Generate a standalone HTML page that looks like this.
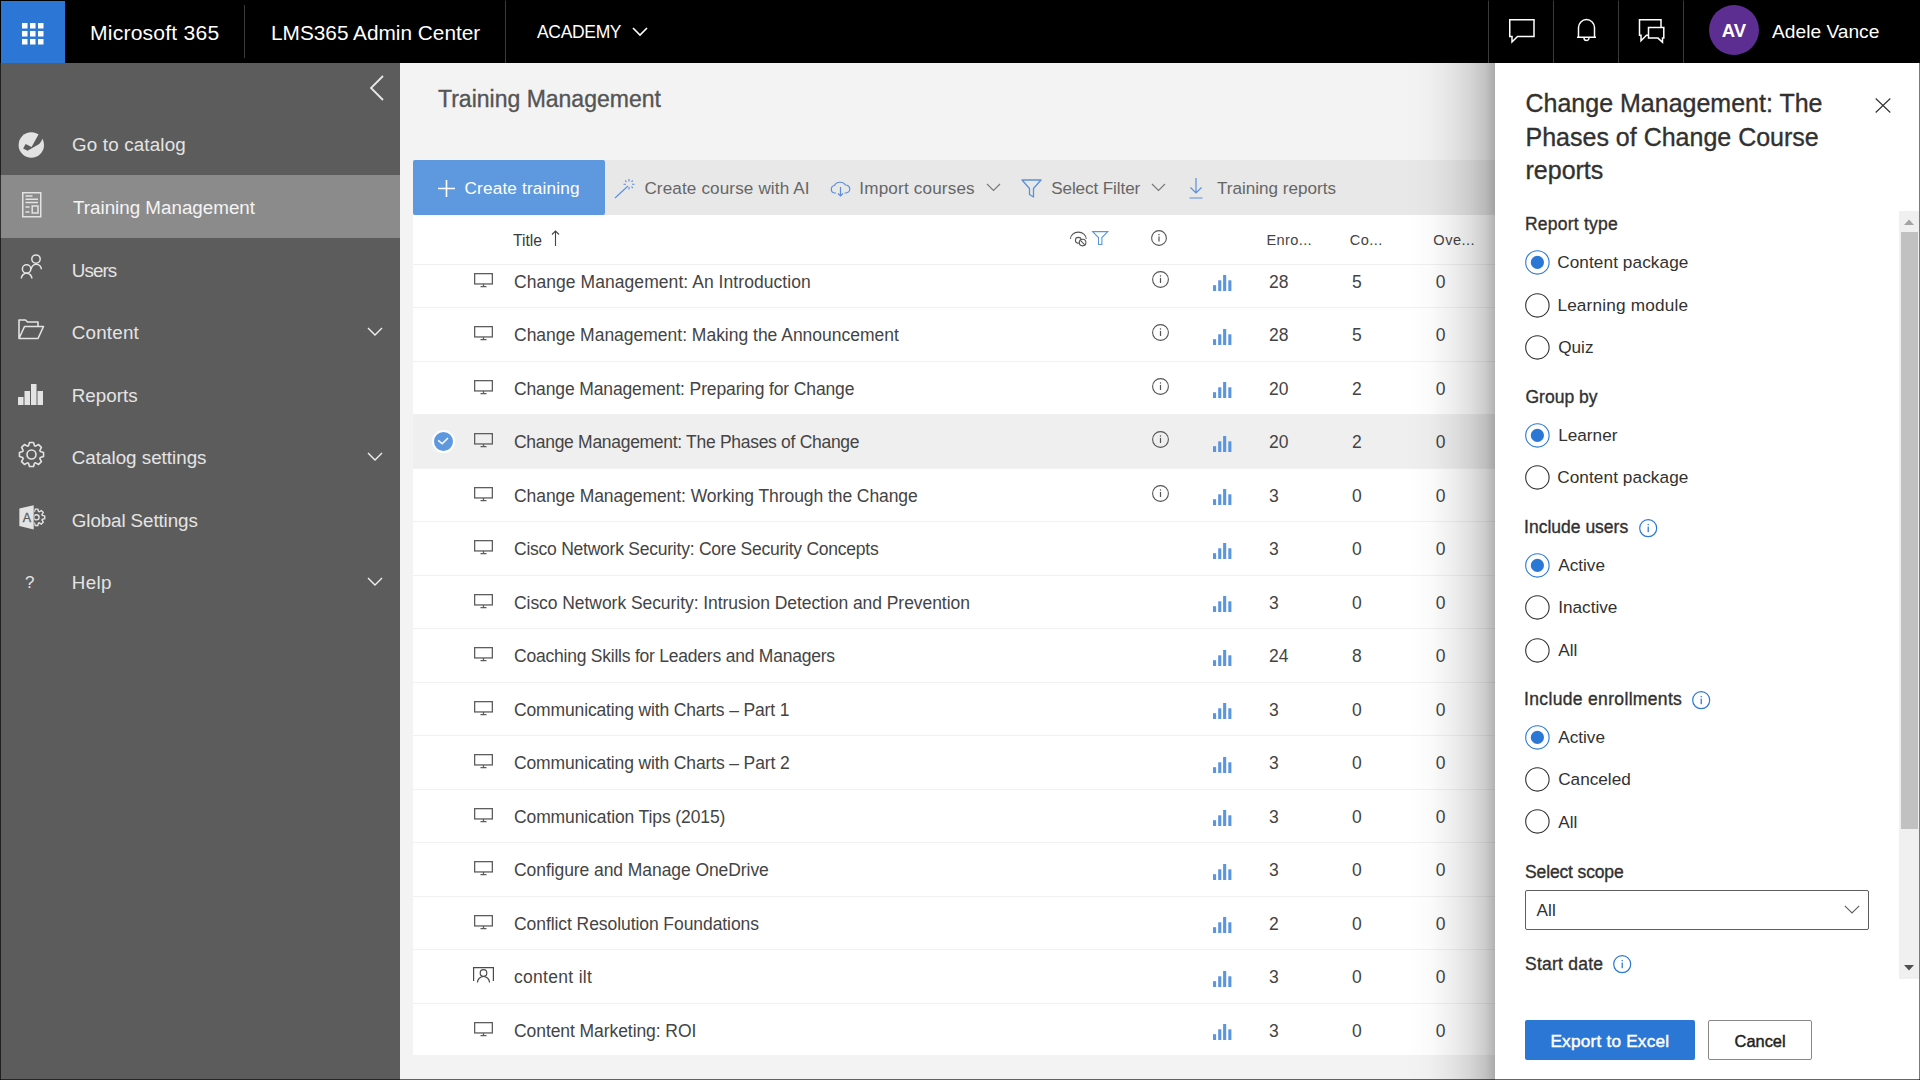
<!DOCTYPE html>
<html><head><meta charset="utf-8">
<style>
*{margin:0;padding:0;box-sizing:border-box}
html,body{width:1920px;height:1080px;overflow:hidden;background:#f3f3f3;font-family:"Liberation Sans",sans-serif}
.abs{position:absolute}
.t{position:absolute;white-space:nowrap;line-height:1}
svg{position:absolute;overflow:visible}
/* header */
#hdr{position:absolute;left:0;top:0;width:1920px;height:63px;background:#000}
#waffle{position:absolute;left:1px;top:1px;width:64px;height:62px;background:#2c77d6}
.hdiv{position:absolute;width:1px;background:#3a3a3a}
/* sidebar */
#side{position:absolute;left:0;top:63px;width:400px;height:1017px;background:#5c5c5c}
.nav{position:absolute;left:0;width:400px;height:63px}
.nav .t{left:73px;font-size:18.8px;color:#e4e4e4}
.nav.sel{background:#8b8b8b}
/* main */
#toolbar{position:absolute;left:413px;top:160px;width:1082px;height:55px;background:#e8e8e8}
#create{position:absolute;left:413px;top:160px;width:192px;height:55px;background:#5e98df;border-radius:2px}
#table{position:absolute;left:413px;top:215px;width:1082px;height:840px;background:#fff;overflow:hidden}
.row{position:absolute;left:0;width:1082px;height:54px;border-top:1px solid #f1f1f1}
.row.sel{background:#efefef}
.row .t{font-size:17.5px;color:#444}
.tb{color:#666;font-size:17.1px}
/* panel */
#panel{position:absolute;left:1495px;top:63px;width:425px;height:1017px;background:#fff}
.lbl{position:absolute;left:30px;font-size:16.8px;font-weight:700;color:#323130;white-space:nowrap;line-height:1;letter-spacing:-0.1px}
.rad{position:absolute;left:30px;width:25px;height:25px;border-radius:50%;border:1.5px solid #323130}
.rad.on{border-color:#2b77d6}
.rad.on::after{content:"";position:absolute;left:4.5px;top:4.5px;width:13px;height:13px;border-radius:50%;background:#2b77d6}
.rtx{position:absolute;left:63px;font-size:17.2px;color:#323130;white-space:nowrap;line-height:1}
</style></head><body>

<!-- HEADER -->
<div id="hdr">
  <div id="waffle">
    <svg style="left:21px;top:21px" width="22" height="22" viewBox="0 0 22 22">
      <g fill="#fff">
        <rect x="0" y="1" width="5.5" height="5.5"/><rect x="8" y="1" width="5.5" height="5.5"/><rect x="16" y="1" width="5.5" height="5.5"/>
        <rect x="0" y="9" width="5.5" height="5.5"/><rect x="8" y="9" width="5.5" height="5.5"/><rect x="16" y="9" width="5.5" height="5.5"/>
        <rect x="0" y="17" width="5.5" height="5.5"/><rect x="8" y="17" width="5.5" height="5.5"/><rect x="16" y="17" width="5.5" height="5.5"/>
      </g>
    </svg>
  </div>
  <div class="t" style="left:90.0px;top:22.3px;font-size:21.1px;color:#fff;letter-spacing:0.208px">Microsoft 365</div>
  <div class="hdiv" style="left:244px;top:5px;height:53px"></div>
  <div class="t" style="left:271px;top:22.8px;font-size:20.8px;color:#fff">LMS365 Admin Center</div>
  <div class="hdiv" style="left:505px;top:0;height:63px"></div>
  <div class="t" style="left:537px;top:23.5px;font-size:17.5px;color:#fff;letter-spacing:-0.333px">ACADEMY</div>
  <svg style="left:632px;top:27px" width="16" height="9" viewBox="0 0 16 9"><path d="M1 1 L8 8 L15 1" fill="none" stroke="#fff" stroke-width="1.6"/></svg>

  <div class="hdiv" style="left:1488px;top:0;height:63px"></div>
  <div class="hdiv" style="left:1553px;top:0;height:63px"></div>
  <div class="hdiv" style="left:1618px;top:0;height:63px"></div>
  <div class="hdiv" style="left:1683px;top:0;height:63px"></div>
  <!-- chat -->
  <svg style="left:1508px;top:19px" width="28" height="25" viewBox="0 0 28 25"><path d="M1.75 0.75 H26 V17.5 H9.5 L4 23 V17.5 H1.75 Z" fill="none" stroke="#fff" stroke-width="1.5" stroke-linejoin="miter"/></svg>
  <!-- bell -->
  <svg style="left:1576px;top:18px" width="21" height="25" viewBox="0 0 21 25"><path d="M2.5 19.3 V9.6 A8 8 0 0 1 18.5 9.6 V19.3 M1 19.3 H20" fill="none" stroke="#fff" stroke-width="1.5"/><path d="M8 20 A2.5 2.5 0 0 0 13 20" fill="none" stroke="#fff" stroke-width="1.4"/></svg>
  <!-- double chat -->
  <svg style="left:1638px;top:19px" width="28" height="25" viewBox="0 0 28 25"><path d="M10 16.3 H8.5 L3 21.8 V16.3 H1.5 V0.75 H23 V8.3" fill="none" stroke="#fff" stroke-width="1.5"/><path d="M10.5 8.5 H25.8 V19.1 H24.5 V23.3 L20 19.1 H10.5 Z" fill="none" stroke="#fff" stroke-width="1.5"/></svg>
  <div class="abs" style="left:1709px;top:5px;width:50px;height:50px;border-radius:50%;background:#5c2e91"></div>
  <div class="t" style="left:1709px;top:22px;width:50px;text-align:center;font-size:18.5px;font-weight:700;color:#fff">AV</div>
  <div class="t" style="left:1772px;top:22px;font-size:19.2px;color:#fff">Adele Vance</div>
</div>

<!-- SIDEBAR -->
<div id="side">
  <svg style="left:369px;top:12px" width="15" height="26" viewBox="0 0 15 26"><path d="M14 1 L2 13 L14 25" fill="none" stroke="#e8e8e8" stroke-width="1.8"/></svg>
  <div class="nav" style="top:49px">
    <svg style="left:18px;top:19px" width="27" height="28" viewBox="0 0 27 28"><circle cx="13.3" cy="14" r="12.7" fill="#e3e3e3"/><path d="M20.6 3.3 L13.6 15.9 L7.65 13.06 L5.13 17.47 L9.54 19.67 L21.2 13.06 Q23.2 11 24.34 8.02 L28 4 L24 -1 Z" fill="#5c5c5c"/></svg>
    <div class="t" style="left:72.0px;top:24px;letter-spacing:0.167px">Go to catalog</div>
  </div>
  <div class="nav sel" style="top:112px">
    <svg style="left:21.5px;top:17px" width="20" height="26" viewBox="0 0 20 26"><g fill="none" stroke="#e3e3e3" stroke-width="1.5"><rect x="0.75" y="0.75" width="18" height="24"/><path d="M3.5 4 H10.5 M3.5 7.2 H16 M3.5 10.4 H16 M3.5 15 H7.5 M3.5 20 H7.5"/><rect x="10.2" y="14" width="5.8" height="7"/></g></svg>
    <div class="t" style="top:24px;color:#f4f4f4">Training Management</div>
  </div>
  <div class="nav" style="top:175px">
    <svg style="left:19px;top:16px" width="25" height="26" viewBox="0 0 25 26"><g fill="none" stroke="#e3e3e3" stroke-width="1.5"><circle cx="17" cy="5.1" r="4.2"/><path d="M12.2 15.3 A5.1 5.1 0 0 1 22.4 15.3"/><circle cx="7.6" cy="14.9" r="4.2" fill="#5c5c5c"/><path d="M2.3 24.6 A5.3 5.3 0 0 1 12.9 24.6"/></g></svg>
    <div class="t" style="left:71.8px;top:24px;letter-spacing:-0.9px">Users</div>
  </div>
  <div class="nav" style="top:237px">
    <svg style="left:18px;top:19px" width="27" height="21" viewBox="0 0 27 21"><path d="M1 19.5 V1 H7.5 L9.5 3 H20 V7.5 M1 19.5 L6.5 7.5 H25.5 L20 19.5 Z" fill="none" stroke="#e3e3e3" stroke-width="1.6" stroke-linejoin="round"/></svg>
    <div class="t" style="left:71.8px;top:24px;letter-spacing:0.2px">Content</div>
    <svg style="left:367px;top:27px" width="16" height="9" viewBox="0 0 16 9"><path d="M1 1 L8 8 L15 1" fill="none" stroke="#f0f0f0" stroke-width="1.4"/></svg>
  </div>
  <div class="nav" style="top:300px">
    <svg style="left:18px;top:21px" width="25" height="21" viewBox="0 0 25 21"><g fill="#e3e3e3"><rect x="0" y="13" width="5.5" height="8"/><rect x="6.5" y="7" width="5.5" height="14"/><rect x="13" y="0" width="5.5" height="21"/><rect x="19.5" y="7" width="5.5" height="14"/></g></svg>
    <div class="t" style="left:71.8px;top:24px">Reports</div>
  </div>
  <div class="nav" style="top:362px">
    <svg style="left:18px;top:16px" width="27" height="27" viewBox="-13.5 -13.5 27 27"><path fill="none" stroke="#e3e3e3" stroke-width="1.6" stroke-linejoin="round" d="M8.80 -3.01 L12.03 -2.00 L12.03 2.00 L8.80 3.01 L8.35 4.09 L9.93 7.09 L7.09 9.93 L4.09 8.35 L3.01 8.80 L2.00 12.03 L-2.00 12.03 L-3.01 8.80 L-4.09 8.35 L-7.09 9.93 L-9.93 7.09 L-8.35 4.09 L-8.80 3.01 L-12.03 2.00 L-12.03 -2.00 L-8.80 -3.01 L-8.35 -4.09 L-9.93 -7.09 L-7.09 -9.93 L-4.09 -8.35 L-3.01 -8.80 L-2.00 -12.03 L2.00 -12.03 L3.01 -8.80 L4.09 -8.35 L7.09 -9.93 L9.93 -7.09 L8.35 -4.09 Z"/><circle cx="0" cy="0" r="4.5" fill="none" stroke="#e3e3e3" stroke-width="1.6"/></svg>
    <div class="t" style="left:71.8px;top:24px">Catalog settings</div>
    <svg style="left:367px;top:27px" width="16" height="9" viewBox="0 0 16 9"><path d="M1 1 L8 8 L15 1" fill="none" stroke="#f0f0f0" stroke-width="1.4"/></svg>
  </div>
  <div class="nav" style="top:425px">
    <svg style="left:19px;top:17px" width="27" height="26" viewBox="0 0 27 26"><defs><clipPath id="gclip"><rect x="15.3" y="0" width="12" height="26"/></clipPath></defs><path d="M0.35 3.5 L14.7 0.35 V24.6 L0.35 21.1 Z" fill="#e3e3e3"/><text x="3.7" y="16.7" font-family="Liberation Sans" font-size="12.5" fill="#5c5c5c" stroke="#5c5c5c" stroke-width="0.3">A</text><g clip-path="url(#gclip)" fill="none" stroke="#e3e3e3" stroke-width="1.4"><path d="M15.52 6.53 L16.14 4.11 L18.86 4.11 L19.48 6.53 L20.18 6.82 L22.33 5.55 L24.25 7.47 L22.98 9.62 L23.27 10.32 L25.69 10.94 L25.69 13.66 L23.27 14.28 L22.98 14.98 L24.25 17.13 L22.33 19.05 L20.18 17.78 L19.48 18.07 L18.86 20.49 L16.14 20.49 L15.52 18.07 L14.82 17.78 L12.67 19.05 L10.75 17.13 L12.02 14.98 L11.73 14.28 L9.31 13.66 L9.31 10.94 L11.73 10.32 L12.02 9.62 L10.75 7.47 L12.67 5.55 L14.82 6.82 Z"/><circle cx="17.5" cy="12.3" r="2.6"/></g></svg>
    <div class="t" style="left:71.8px;top:24px;letter-spacing:-0.1px">Global Settings</div>
  </div>
  <div class="nav" style="top:487px">
    <div class="t" style="left:25px;top:24px;font-size:17px;color:#e3e3e3">?</div>
    <div class="t" style="left:71.8px;top:24px;letter-spacing:0.33px">Help</div>
    <svg style="left:367px;top:27px" width="16" height="9" viewBox="0 0 16 9"><path d="M1 1 L8 8 L15 1" fill="none" stroke="#f0f0f0" stroke-width="1.4"/></svg>
  </div>
</div>

<!-- MAIN -->
<div class="t" style="left:438px;top:88px;font-size:23px;color:#555;-webkit-text-stroke:0.35px #555">Training Management</div>
<div id="toolbar"></div>
<div id="create"></div>
<svg style="left:438px;top:180px" width="17" height="17" viewBox="0 0 17 17"><path d="M8.5 0 V17 M0 8.5 H17" stroke="#fff" stroke-width="1.6"/></svg>
<div class="t" style="left:464.5px;top:180px;font-size:17.2px;color:#fff;letter-spacing:0.16px">Create training</div>
<svg style="left:614px;top:177px" width="22" height="22" viewBox="0 0 22 22"><g stroke="#5b8fdb" stroke-width="1.1" fill="none"><path d="M1 21 L14 9"/><path d="M15 2 V4.5 M15 10 V12.5 M9.5 7.2 H12 M18 7.2 H20.5 M11.2 3.5 L12.5 4.8 M17.5 9.7 L18.8 11 M18.8 3.5 L17.5 4.8"/></g></svg>
<div class="t tb" style="left:644.4px;top:180px;letter-spacing:0.135px">Create course with AI</div>
<svg style="left:830px;top:181px" width="21" height="16" viewBox="0 0 21 16"><g fill="none" stroke="#5b8fdb" stroke-width="1.2"><path d="M6 12 H4.5 A3.8 3.8 0 0 1 4.5 4.5 A6 5 0 0 1 15.5 4 A4 4 0 0 1 16 12 H14.5"/><path d="M10.5 6 V15 M8 12.5 L10.5 15 L13 12.5"/></g></svg>
<div class="t tb" style="left:859.3px;top:180px;letter-spacing:0.177px">Import courses</div>
<svg style="left:986px;top:183px" width="15" height="9" viewBox="0 0 15 9"><path d="M1 1 L7.5 7.5 L14 1" fill="none" stroke="#777" stroke-width="1.1"/></svg>
<svg style="left:1021px;top:179px" width="21" height="19" viewBox="0 0 21 19"><path d="M1 1 H20 L12.5 9.5 V18 L8.5 15.5 V9.5 Z" fill="none" stroke="#5b8fdb" stroke-width="1.3" stroke-linejoin="round"/></svg>
<div class="t tb" style="left:1051.2px;top:180px;letter-spacing:-0.1px">Select Filter</div>
<svg style="left:1151px;top:183px" width="15" height="9" viewBox="0 0 15 9"><path d="M1 1 L7.5 7.5 L14 1" fill="none" stroke="#777" stroke-width="1.1"/></svg>
<svg style="left:1189px;top:178px" width="14" height="21" viewBox="0 0 14 21"><g fill="none" stroke="#5b8fdb" stroke-width="1.2"><path d="M7 0 V15 M1.5 9.5 L7 15 L12.5 9.5 M0.5 20 H13.5"/></g></svg>
<div class="t tb" style="left:1217px;top:180px">Training reports</div>
<div id="table">
<div class="row" style="top:38.8px"><svg style="left:60.5px;top:18px" width="19" height="15" viewBox="0 0 19 15"><g fill="none" stroke="#5e5e5e" stroke-width="1.3"><rect x="0.65" y="0.65" width="17.7" height="10.3"/><path d="M9.5 11 V13.6 M6.5 13.6 H12.5"/></g></svg><div class="t" style="left:101px;top:19px;letter-spacing:0.058px">Change Management: An Introduction</div><svg style="left:739px;top:16px" width="17" height="17" viewBox="0 0 17 17"><circle cx="8.5" cy="8.5" r="7.9" fill="none" stroke="#555" stroke-width="1.1"/><rect x="7.9" y="6.9" width="1.2" height="5.1" fill="#555"/><rect x="7.9" y="4.3" width="1.2" height="1.3" fill="#555"/></svg><svg style="left:799.5px;top:20.3px" width="20" height="17" viewBox="0 0 20 17"><g fill="#5a95e0"><rect x="0" y="10.2" width="3.1" height="5.8"/><rect x="5.2" y="5.3" width="3.1" height="10.7"/><rect x="10.1" y="0" width="3.1" height="16"/><rect x="15.3" y="5.3" width="3.1" height="10.7"/></g></svg><div class="t" style="left:856px;top:19px">28</div><div class="t" style="left:939px;top:19px">5</div><div class="t" style="left:1022.7px;top:19px">0</div></div>
<div class="row" style="top:92.3px"><svg style="left:60.5px;top:18px" width="19" height="15" viewBox="0 0 19 15"><g fill="none" stroke="#5e5e5e" stroke-width="1.3"><rect x="0.65" y="0.65" width="17.7" height="10.3"/><path d="M9.5 11 V13.6 M6.5 13.6 H12.5"/></g></svg><div class="t" style="left:101px;top:19px;letter-spacing:-0.010px">Change Management: Making the Announcement</div><svg style="left:739px;top:16px" width="17" height="17" viewBox="0 0 17 17"><circle cx="8.5" cy="8.5" r="7.9" fill="none" stroke="#555" stroke-width="1.1"/><rect x="7.9" y="6.9" width="1.2" height="5.1" fill="#555"/><rect x="7.9" y="4.3" width="1.2" height="1.3" fill="#555"/></svg><svg style="left:799.5px;top:20.3px" width="20" height="17" viewBox="0 0 20 17"><g fill="#5a95e0"><rect x="0" y="10.2" width="3.1" height="5.8"/><rect x="5.2" y="5.3" width="3.1" height="10.7"/><rect x="10.1" y="0" width="3.1" height="16"/><rect x="15.3" y="5.3" width="3.1" height="10.7"/></g></svg><div class="t" style="left:856px;top:19px">28</div><div class="t" style="left:939px;top:19px">5</div><div class="t" style="left:1022.7px;top:19px">0</div></div>
<div class="row" style="top:145.8px"><svg style="left:60.5px;top:18px" width="19" height="15" viewBox="0 0 19 15"><g fill="none" stroke="#5e5e5e" stroke-width="1.3"><rect x="0.65" y="0.65" width="17.7" height="10.3"/><path d="M9.5 11 V13.6 M6.5 13.6 H12.5"/></g></svg><div class="t" style="left:101px;top:19px;letter-spacing:-0.129px">Change Management: Preparing for Change</div><svg style="left:739px;top:16px" width="17" height="17" viewBox="0 0 17 17"><circle cx="8.5" cy="8.5" r="7.9" fill="none" stroke="#555" stroke-width="1.1"/><rect x="7.9" y="6.9" width="1.2" height="5.1" fill="#555"/><rect x="7.9" y="4.3" width="1.2" height="1.3" fill="#555"/></svg><svg style="left:799.5px;top:20.3px" width="20" height="17" viewBox="0 0 20 17"><g fill="#5a95e0"><rect x="0" y="10.2" width="3.1" height="5.8"/><rect x="5.2" y="5.3" width="3.1" height="10.7"/><rect x="10.1" y="0" width="3.1" height="16"/><rect x="15.3" y="5.3" width="3.1" height="10.7"/></g></svg><div class="t" style="left:856px;top:19px">20</div><div class="t" style="left:939px;top:19px">2</div><div class="t" style="left:1022.7px;top:19px">0</div></div>
<div class="row sel" style="top:199.3px"><div class="abs" style="left:19px;top:14.7px;width:23px;height:23px;border-radius:50%;background:#5e98df;border:2px solid #fff"></div><svg style="left:24px;top:22px" width="12" height="8" viewBox="0 0 12 8"><path d="M1.2 3.4 L5.2 6.8 L11 1" fill="none" stroke="#fff" stroke-width="1.5"/></svg><svg style="left:60.5px;top:18px" width="19" height="15" viewBox="0 0 19 15"><g fill="none" stroke="#5e5e5e" stroke-width="1.3"><rect x="0.65" y="0.65" width="17.7" height="10.3"/><path d="M9.5 11 V13.6 M6.5 13.6 H12.5"/></g></svg><div class="t" style="left:101px;top:19px;letter-spacing:-0.295px">Change Management: The Phases of Change</div><svg style="left:739px;top:16px" width="17" height="17" viewBox="0 0 17 17"><circle cx="8.5" cy="8.5" r="7.9" fill="none" stroke="#555" stroke-width="1.1"/><rect x="7.9" y="6.9" width="1.2" height="5.1" fill="#555"/><rect x="7.9" y="4.3" width="1.2" height="1.3" fill="#555"/></svg><svg style="left:799.5px;top:20.3px" width="20" height="17" viewBox="0 0 20 17"><g fill="#5a95e0"><rect x="0" y="10.2" width="3.1" height="5.8"/><rect x="5.2" y="5.3" width="3.1" height="10.7"/><rect x="10.1" y="0" width="3.1" height="16"/><rect x="15.3" y="5.3" width="3.1" height="10.7"/></g></svg><div class="t" style="left:856px;top:19px">20</div><div class="t" style="left:939px;top:19px">2</div><div class="t" style="left:1022.7px;top:19px">0</div></div>
<div class="row" style="top:252.8px"><svg style="left:60.5px;top:18px" width="19" height="15" viewBox="0 0 19 15"><g fill="none" stroke="#5e5e5e" stroke-width="1.3"><rect x="0.65" y="0.65" width="17.7" height="10.3"/><path d="M9.5 11 V13.6 M6.5 13.6 H12.5"/></g></svg><div class="t" style="left:101px;top:19px;letter-spacing:-0.073px">Change Management: Working Through the Change</div><svg style="left:739px;top:16px" width="17" height="17" viewBox="0 0 17 17"><circle cx="8.5" cy="8.5" r="7.9" fill="none" stroke="#555" stroke-width="1.1"/><rect x="7.9" y="6.9" width="1.2" height="5.1" fill="#555"/><rect x="7.9" y="4.3" width="1.2" height="1.3" fill="#555"/></svg><svg style="left:799.5px;top:20.3px" width="20" height="17" viewBox="0 0 20 17"><g fill="#5a95e0"><rect x="0" y="10.2" width="3.1" height="5.8"/><rect x="5.2" y="5.3" width="3.1" height="10.7"/><rect x="10.1" y="0" width="3.1" height="16"/><rect x="15.3" y="5.3" width="3.1" height="10.7"/></g></svg><div class="t" style="left:856px;top:19px">3</div><div class="t" style="left:939px;top:19px">0</div><div class="t" style="left:1022.7px;top:19px">0</div></div>
<div class="row" style="top:306.3px"><svg style="left:60.5px;top:18px" width="19" height="15" viewBox="0 0 19 15"><g fill="none" stroke="#5e5e5e" stroke-width="1.3"><rect x="0.65" y="0.65" width="17.7" height="10.3"/><path d="M9.5 11 V13.6 M6.5 13.6 H12.5"/></g></svg><div class="t" style="left:101px;top:19px;letter-spacing:-0.238px">Cisco Network Security: Core Security Concepts</div><svg style="left:799.5px;top:20.3px" width="20" height="17" viewBox="0 0 20 17"><g fill="#5a95e0"><rect x="0" y="10.2" width="3.1" height="5.8"/><rect x="5.2" y="5.3" width="3.1" height="10.7"/><rect x="10.1" y="0" width="3.1" height="16"/><rect x="15.3" y="5.3" width="3.1" height="10.7"/></g></svg><div class="t" style="left:856px;top:19px">3</div><div class="t" style="left:939px;top:19px">0</div><div class="t" style="left:1022.7px;top:19px">0</div></div>
<div class="row" style="top:359.8px"><svg style="left:60.5px;top:18px" width="19" height="15" viewBox="0 0 19 15"><g fill="none" stroke="#5e5e5e" stroke-width="1.3"><rect x="0.65" y="0.65" width="17.7" height="10.3"/><path d="M9.5 11 V13.6 M6.5 13.6 H12.5"/></g></svg><div class="t" style="left:101px;top:19px;letter-spacing:-0.056px">Cisco Network Security: Intrusion Detection and Prevention</div><svg style="left:799.5px;top:20.3px" width="20" height="17" viewBox="0 0 20 17"><g fill="#5a95e0"><rect x="0" y="10.2" width="3.1" height="5.8"/><rect x="5.2" y="5.3" width="3.1" height="10.7"/><rect x="10.1" y="0" width="3.1" height="16"/><rect x="15.3" y="5.3" width="3.1" height="10.7"/></g></svg><div class="t" style="left:856px;top:19px">3</div><div class="t" style="left:939px;top:19px">0</div><div class="t" style="left:1022.7px;top:19px">0</div></div>
<div class="row" style="top:413.3px"><svg style="left:60.5px;top:18px" width="19" height="15" viewBox="0 0 19 15"><g fill="none" stroke="#5e5e5e" stroke-width="1.3"><rect x="0.65" y="0.65" width="17.7" height="10.3"/><path d="M9.5 11 V13.6 M6.5 13.6 H12.5"/></g></svg><div class="t" style="left:101px;top:19px;letter-spacing:-0.223px">Coaching Skills for Leaders and Managers</div><svg style="left:799.5px;top:20.3px" width="20" height="17" viewBox="0 0 20 17"><g fill="#5a95e0"><rect x="0" y="10.2" width="3.1" height="5.8"/><rect x="5.2" y="5.3" width="3.1" height="10.7"/><rect x="10.1" y="0" width="3.1" height="16"/><rect x="15.3" y="5.3" width="3.1" height="10.7"/></g></svg><div class="t" style="left:856px;top:19px">24</div><div class="t" style="left:939px;top:19px">8</div><div class="t" style="left:1022.7px;top:19px">0</div></div>
<div class="row" style="top:466.8px"><svg style="left:60.5px;top:18px" width="19" height="15" viewBox="0 0 19 15"><g fill="none" stroke="#5e5e5e" stroke-width="1.3"><rect x="0.65" y="0.65" width="17.7" height="10.3"/><path d="M9.5 11 V13.6 M6.5 13.6 H12.5"/></g></svg><div class="t" style="left:101px;top:19px;letter-spacing:-0.142px">Communicating with Charts – Part 1</div><svg style="left:799.5px;top:20.3px" width="20" height="17" viewBox="0 0 20 17"><g fill="#5a95e0"><rect x="0" y="10.2" width="3.1" height="5.8"/><rect x="5.2" y="5.3" width="3.1" height="10.7"/><rect x="10.1" y="0" width="3.1" height="16"/><rect x="15.3" y="5.3" width="3.1" height="10.7"/></g></svg><div class="t" style="left:856px;top:19px">3</div><div class="t" style="left:939px;top:19px">0</div><div class="t" style="left:1022.7px;top:19px">0</div></div>
<div class="row" style="top:520.3px"><svg style="left:60.5px;top:18px" width="19" height="15" viewBox="0 0 19 15"><g fill="none" stroke="#5e5e5e" stroke-width="1.3"><rect x="0.65" y="0.65" width="17.7" height="10.3"/><path d="M9.5 11 V13.6 M6.5 13.6 H12.5"/></g></svg><div class="t" style="left:101px;top:19px;letter-spacing:-0.136px">Communicating with Charts – Part 2</div><svg style="left:799.5px;top:20.3px" width="20" height="17" viewBox="0 0 20 17"><g fill="#5a95e0"><rect x="0" y="10.2" width="3.1" height="5.8"/><rect x="5.2" y="5.3" width="3.1" height="10.7"/><rect x="10.1" y="0" width="3.1" height="16"/><rect x="15.3" y="5.3" width="3.1" height="10.7"/></g></svg><div class="t" style="left:856px;top:19px">3</div><div class="t" style="left:939px;top:19px">0</div><div class="t" style="left:1022.7px;top:19px">0</div></div>
<div class="row" style="top:573.8px"><svg style="left:60.5px;top:18px" width="19" height="15" viewBox="0 0 19 15"><g fill="none" stroke="#5e5e5e" stroke-width="1.3"><rect x="0.65" y="0.65" width="17.7" height="10.3"/><path d="M9.5 11 V13.6 M6.5 13.6 H12.5"/></g></svg><div class="t" style="left:101px;top:19px;letter-spacing:-0.108px">Communication Tips (2015)</div><svg style="left:799.5px;top:20.3px" width="20" height="17" viewBox="0 0 20 17"><g fill="#5a95e0"><rect x="0" y="10.2" width="3.1" height="5.8"/><rect x="5.2" y="5.3" width="3.1" height="10.7"/><rect x="10.1" y="0" width="3.1" height="16"/><rect x="15.3" y="5.3" width="3.1" height="10.7"/></g></svg><div class="t" style="left:856px;top:19px">3</div><div class="t" style="left:939px;top:19px">0</div><div class="t" style="left:1022.7px;top:19px">0</div></div>
<div class="row" style="top:627.3px"><svg style="left:60.5px;top:18px" width="19" height="15" viewBox="0 0 19 15"><g fill="none" stroke="#5e5e5e" stroke-width="1.3"><rect x="0.65" y="0.65" width="17.7" height="10.3"/><path d="M9.5 11 V13.6 M6.5 13.6 H12.5"/></g></svg><div class="t" style="left:101px;top:19px;letter-spacing:-0.071px">Configure and Manage OneDrive</div><svg style="left:799.5px;top:20.3px" width="20" height="17" viewBox="0 0 20 17"><g fill="#5a95e0"><rect x="0" y="10.2" width="3.1" height="5.8"/><rect x="5.2" y="5.3" width="3.1" height="10.7"/><rect x="10.1" y="0" width="3.1" height="16"/><rect x="15.3" y="5.3" width="3.1" height="10.7"/></g></svg><div class="t" style="left:856px;top:19px">3</div><div class="t" style="left:939px;top:19px">0</div><div class="t" style="left:1022.7px;top:19px">0</div></div>
<div class="row" style="top:680.8px"><svg style="left:60.5px;top:18px" width="19" height="15" viewBox="0 0 19 15"><g fill="none" stroke="#5e5e5e" stroke-width="1.3"><rect x="0.65" y="0.65" width="17.7" height="10.3"/><path d="M9.5 11 V13.6 M6.5 13.6 H12.5"/></g></svg><div class="t" style="left:101px;top:19px;letter-spacing:-0.070px">Conflict Resolution Foundations</div><svg style="left:799.5px;top:20.3px" width="20" height="17" viewBox="0 0 20 17"><g fill="#5a95e0"><rect x="0" y="10.2" width="3.1" height="5.8"/><rect x="5.2" y="5.3" width="3.1" height="10.7"/><rect x="10.1" y="0" width="3.1" height="16"/><rect x="15.3" y="5.3" width="3.1" height="10.7"/></g></svg><div class="t" style="left:856px;top:19px">2</div><div class="t" style="left:939px;top:19px">0</div><div class="t" style="left:1022.7px;top:19px">0</div></div>
<div class="row" style="top:734.3px"><svg style="left:60px;top:17px" width="21" height="17" viewBox="0 0 21 17"><g fill="none" stroke="#4a4a4a" stroke-width="1.2"><path d="M3 0.6 H0.6 V14 M18 0.6 H20.4 V14 M0.6 0.6 H20.4"/><circle cx="10.5" cy="6" r="3.3"/><path d="M4.5 15.5 A6 6 0 0 1 16.5 15.5"/></g></svg><div class="t" style="left:101px;top:19px;letter-spacing:0.300px">content ilt</div><svg style="left:799.5px;top:20.3px" width="20" height="17" viewBox="0 0 20 17"><g fill="#5a95e0"><rect x="0" y="10.2" width="3.1" height="5.8"/><rect x="5.2" y="5.3" width="3.1" height="10.7"/><rect x="10.1" y="0" width="3.1" height="16"/><rect x="15.3" y="5.3" width="3.1" height="10.7"/></g></svg><div class="t" style="left:856px;top:19px">3</div><div class="t" style="left:939px;top:19px">0</div><div class="t" style="left:1022.7px;top:19px">0</div></div>
<div class="row" style="top:787.8px"><svg style="left:60.5px;top:18px" width="19" height="15" viewBox="0 0 19 15"><g fill="none" stroke="#5e5e5e" stroke-width="1.3"><rect x="0.65" y="0.65" width="17.7" height="10.3"/><path d="M9.5 11 V13.6 M6.5 13.6 H12.5"/></g></svg><div class="t" style="left:101px;top:19px;letter-spacing:-0.071px">Content Marketing: ROI</div><svg style="left:799.5px;top:20.3px" width="20" height="17" viewBox="0 0 20 17"><g fill="#5a95e0"><rect x="0" y="10.2" width="3.1" height="5.8"/><rect x="5.2" y="5.3" width="3.1" height="10.7"/><rect x="10.1" y="0" width="3.1" height="16"/><rect x="15.3" y="5.3" width="3.1" height="10.7"/></g></svg><div class="t" style="left:856px;top:19px">3</div><div class="t" style="left:939px;top:19px">0</div><div class="t" style="left:1022.7px;top:19px">0</div></div>
<div class="abs" style="left:0;top:0;width:1082px;height:50px;background:#fff;border-bottom:1px solid #f0f0f0"></div>
<div class="t" style="left:100px;top:18px;font-size:15.7px;color:#3a3a3a">Title</div>
<svg style="left:138px;top:15px" width="9" height="17" viewBox="0 0 9 17"><path d="M4.5 1 V16 M1 4.5 L4.5 1 L8 4.5" fill="none" stroke="#444" stroke-width="1.1"/></svg>
<svg style="left:657px;top:16px" width="18" height="16" viewBox="0 0 18 16"><g fill="none" stroke="#555" stroke-width="1.1"><path d="M0.5 8 A7.8 6.8 0 0 1 16.2 8"/><circle cx="8.3" cy="9.3" r="2.9"/><circle cx="12.6" cy="11.6" r="3.3" fill="#fff"/><path d="M10.4 9.4 L14.8 13.8"/></g></svg><svg style="left:678.5px;top:15.6px" width="17" height="15" viewBox="0 0 17 15"><path d="M0.6 0.6 H15.8 L9.9 6.6 V13.5 H6.5 V6.6 Z" fill="none" stroke="#5a95e0" stroke-width="1.1" stroke-linejoin="miter"/></svg>
<svg style="left:738px;top:15px" width="16" height="16" viewBox="0 0 16 16"><circle cx="8" cy="8" r="7.4" fill="none" stroke="#555" stroke-width="1.1"/><rect x="7.4" y="6.5" width="1.2" height="5" fill="#555"/><rect x="7.4" y="4" width="1.2" height="1.3" fill="#555"/></svg>
<div class="t" style="left:853.5px;top:18px;font-size:14.6px;color:#444;letter-spacing:0.35px">Enro...</div>
<div class="t" style="left:936.7px;top:18px;font-size:14.6px;color:#444;letter-spacing:0.475px">Co...</div>
<div class="t" style="left:1020.3px;top:18px;font-size:14.6px;color:#444;letter-spacing:0.48px">Ove...</div>
</div>

<!-- PANEL -->
<div id="panel">
<div class="t" style="left:30.5px;top:27.5px;font-size:25px;color:#323130;-webkit-text-stroke:0.35px #323130">Change Management: The</div>
<div class="t" style="left:30.5px;top:61.8px;font-size:25px;color:#323130;-webkit-text-stroke:0.35px #323130">Phases of Change Course</div>
<div class="t" style="left:30.5px;top:95.2px;font-size:25px;color:#323130;-webkit-text-stroke:0.35px #323130">reports</div>
<svg style="left:379.5px;top:35px" width="16" height="15" viewBox="0 0 16 15"><path d="M0.7 0.5 L15.3 14.5 M15.3 0.5 L0.7 14.5" stroke="#323130" stroke-width="1.1"/></svg>
<div class="t" style="left:30.0px;top:153.4px;font-size:17.5px;color:#323130;-webkit-text-stroke:0.35px #323130;letter-spacing:0.23px">Report type</div>
<svg style="left:29.8px;top:186.8px" width="24.8" height="24.8" viewBox="0 0 24.8 24.8"><circle cx="12.4" cy="12.4" r="11.7" fill="none" stroke="#2b77d6" stroke-width="1.1"/><circle cx="12.4" cy="12.4" r="6.6" fill="#2b77d6"/></svg><div class="t" style="left:62.2px;top:190.9px;font-size:17.2px;color:#323130;letter-spacing:0.086px">Content package</div>
<svg style="left:29.8px;top:230.1px" width="24.8" height="24.8" viewBox="0 0 24.8 24.8"><circle cx="12.4" cy="12.4" r="11.7" fill="none" stroke="#323130" stroke-width="1.1"/></svg><div class="t" style="left:62.4px;top:234.2px;font-size:17.2px;color:#323130;letter-spacing:0.179px">Learning module</div>
<svg style="left:29.8px;top:271.8px" width="24.8" height="24.8" viewBox="0 0 24.8 24.8"><circle cx="12.4" cy="12.4" r="11.7" fill="none" stroke="#323130" stroke-width="1.1"/></svg><div class="t" style="left:63.2px;top:275.5px;font-size:17.2px;color:#323130">Quiz</div>
<div class="t" style="left:30.5px;top:325.8px;font-size:17.5px;color:#323130;-webkit-text-stroke:0.35px #323130">Group by</div>
<svg style="left:29.8px;top:360.0px" width="24.8" height="24.8" viewBox="0 0 24.8 24.8"><circle cx="12.4" cy="12.4" r="11.7" fill="none" stroke="#2b77d6" stroke-width="1.1"/><circle cx="12.4" cy="12.4" r="6.6" fill="#2b77d6"/></svg><div class="t" style="left:63.2px;top:364.1px;font-size:17.2px;color:#323130">Learner</div>
<svg style="left:29.8px;top:401.8px" width="24.8" height="24.8" viewBox="0 0 24.8 24.8"><circle cx="12.4" cy="12.4" r="11.7" fill="none" stroke="#323130" stroke-width="1.1"/></svg><div class="t" style="left:62.2px;top:405.8px;font-size:17.2px;color:#323130;letter-spacing:0.086px">Content package</div>
<div class="t" style="left:29.1px;top:455.7px;font-size:17.5px;color:#323130;-webkit-text-stroke:0.35px #323130">Include users</div>
<svg style="left:144.4px;top:455.8px" width="18.4" height="18.4" viewBox="0 0 18.4 18.4"><circle cx="9.2" cy="9.2" r="8.5" fill="none" stroke="#2b77d6" stroke-width="1.2"/><rect x="8.6" y="7.6" width="1.25" height="5.6" fill="#2b77d6"/><rect x="8.6" y="4.9" width="1.25" height="1.3" fill="#2b77d6"/></svg>
<svg style="left:29.8px;top:489.7px" width="24.8" height="24.8" viewBox="0 0 24.8 24.8"><circle cx="12.4" cy="12.4" r="11.7" fill="none" stroke="#2b77d6" stroke-width="1.1"/><circle cx="12.4" cy="12.4" r="6.6" fill="#2b77d6"/></svg><div class="t" style="left:63.2px;top:493.8px;font-size:17.2px;color:#323130">Active</div>
<svg style="left:29.8px;top:532.1px" width="24.8" height="24.8" viewBox="0 0 24.8 24.8"><circle cx="12.4" cy="12.4" r="11.7" fill="none" stroke="#323130" stroke-width="1.1"/></svg><div class="t" style="left:63.2px;top:535.7px;font-size:17.2px;color:#323130">Inactive</div>
<svg style="left:29.8px;top:574.8px" width="24.8" height="24.8" viewBox="0 0 24.8 24.8"><circle cx="12.4" cy="12.4" r="11.7" fill="none" stroke="#323130" stroke-width="1.1"/></svg><div class="t" style="left:63.2px;top:578.9px;font-size:17.2px;color:#323130">All</div>
<div class="t" style="left:29.1px;top:627.8px;font-size:17.5px;color:#323130;-webkit-text-stroke:0.35px #323130;letter-spacing:0.333px">Include enrollments</div>
<svg style="left:197.2px;top:627.9px" width="18.4" height="18.4" viewBox="0 0 18.4 18.4"><circle cx="9.2" cy="9.2" r="8.5" fill="none" stroke="#2b77d6" stroke-width="1.2"/><rect x="8.6" y="7.6" width="1.25" height="5.6" fill="#2b77d6"/><rect x="8.6" y="4.9" width="1.25" height="1.3" fill="#2b77d6"/></svg>
<svg style="left:29.8px;top:662.0px" width="24.8" height="24.8" viewBox="0 0 24.8 24.8"><circle cx="12.4" cy="12.4" r="11.7" fill="none" stroke="#2b77d6" stroke-width="1.1"/><circle cx="12.4" cy="12.4" r="6.6" fill="#2b77d6"/></svg><div class="t" style="left:63.2px;top:666.1px;font-size:17.2px;color:#323130">Active</div>
<svg style="left:29.8px;top:704.2px" width="24.8" height="24.8" viewBox="0 0 24.8 24.8"><circle cx="12.4" cy="12.4" r="11.7" fill="none" stroke="#323130" stroke-width="1.1"/></svg><div class="t" style="left:63.2px;top:708.3px;font-size:17.2px;color:#323130">Canceled</div>
<svg style="left:29.8px;top:746.4px" width="24.8" height="24.8" viewBox="0 0 24.8 24.8"><circle cx="12.4" cy="12.4" r="11.7" fill="none" stroke="#323130" stroke-width="1.1"/></svg><div class="t" style="left:63.2px;top:750.5px;font-size:17.2px;color:#323130">All</div>
<div class="t" style="left:30.0px;top:800.9px;font-size:17.5px;color:#323130;-webkit-text-stroke:0.35px #323130;letter-spacing:-0.136px">Select scope</div>
<div class="abs" style="left:30px;top:827px;width:344px;height:40px;border:1.3px solid #605e5c;border-radius:2px"></div>
<div class="t" style="left:41.6px;top:839.4px;font-size:17.2px;color:#323130">All</div>
<svg style="left:349px;top:841.5px" width="16" height="9" viewBox="0 0 16 9"><path d="M0.8 0.8 L8 8 L15.2 0.8" fill="none" stroke="#605e5c" stroke-width="1.1"/></svg>
<div class="t" style="left:30.0px;top:892.5px;font-size:17.5px;color:#323130;-webkit-text-stroke:0.35px #323130;letter-spacing:0.233px">Start date</div>
<svg style="left:117.9px;top:892.0px" width="18.4" height="18.4" viewBox="0 0 18.4 18.4"><circle cx="9.2" cy="9.2" r="8.5" fill="none" stroke="#2b77d6" stroke-width="1.2"/><rect x="8.6" y="7.6" width="1.25" height="5.6" fill="#2b77d6"/><rect x="8.6" y="4.9" width="1.25" height="1.3" fill="#2b77d6"/></svg>
<div class="abs" style="left:404px;top:148px;width:19.5px;height:768px;background:#f0f0f0"></div>
<div class="abs" style="left:406px;top:169px;width:16.5px;height:597px;background:#c1c1c1"></div>
<svg style="left:409px;top:156px" width="10" height="6" viewBox="0 0 10 6"><path d="M0 6 L5 0.5 L10 6 Z" fill="#a3a3a3"/></svg>
<svg style="left:409px;top:902px" width="10" height="6" viewBox="0 0 10 6"><path d="M0 0 L5 5.5 L10 0 Z" fill="#505050"/></svg>
<div class="abs" style="left:30px;top:957px;width:170px;height:40px;background:#2b77d6;border-radius:2px"></div>
<div class="t" style="left:55.4px;top:969.5px;font-size:17.2px;color:#fff;-webkit-text-stroke:0.45px #fff;letter-spacing:0.221px">Export to Excel</div>
<div class="abs" style="left:213px;top:957px;width:104px;height:40px;border:1px solid #8a8886;border-radius:2px"></div>
<div class="t" style="left:239.6px;top:970.1px;font-size:16.4px;color:#201f1e;-webkit-text-stroke:0.45px #201f1e">Cancel</div>
<div class="abs" style="left:424px;top:0;width:1px;height:1017px;background:#7a7a7a"></div>
</div>
<div class="abs" style="left:1405px;top:63px;width:90px;height:1017px;background:linear-gradient(to right,rgba(0,0,0,0) 0%,rgba(0,0,0,0.016) 28%,rgba(0,0,0,0.063) 52%,rgba(0,0,0,0.12) 72%,rgba(0,0,0,0.2) 89%,rgba(0,0,0,0.3) 100%)"></div>
<div class="abs" style="left:0;top:0;width:1px;height:1080px;background:rgba(0,0,0,0.65)"></div><div class="abs" style="left:0;top:0;width:1920px;height:1px;background:rgba(0,0,0,0.65)"></div>
<div class="abs" style="left:0;top:1079px;width:1920px;height:1px;background:rgba(0,0,0,0.6)"></div>


</body></html>
